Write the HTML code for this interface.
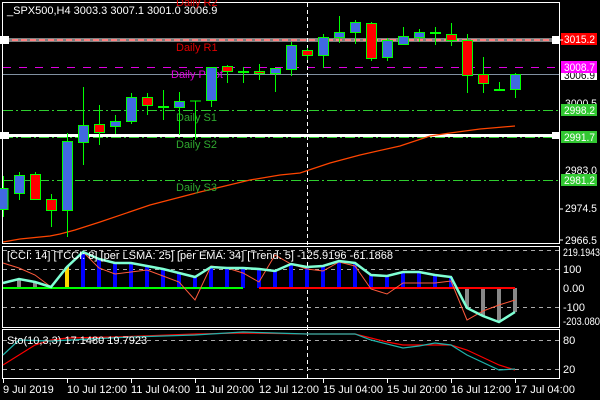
<!DOCTYPE html>
<html><head><meta charset="utf-8"><style>
html,body{margin:0;padding:0;background:#000;width:600px;height:400px;overflow:hidden}
svg{display:block}
text{font-family:"Liberation Sans",sans-serif;font-size:11px}
</style></head><body>
<svg width="600" height="400" xmlns="http://www.w3.org/2000/svg">
<rect width="600" height="400" fill="#000"/>
<rect x="2.5" y="2.5" width="557" height="241" fill="none" stroke="#fff"/>
<rect x="2.5" y="246.5" width="557" height="81" fill="none" stroke="#fff"/>
<rect x="2.5" y="329.5" width="557" height="49" fill="none" stroke="#fff"/>
<line x1="3" y1="39" x2="559" y2="39" stroke="#fff" stroke-width="1"/>
<line x1="3" y1="41" x2="559" y2="41" stroke="#fff" stroke-width="1"/>
<line x1="3" y1="40" x2="559" y2="40" stroke="#f00" stroke-width="1" stroke-dasharray="6,3"/>
<line x1="3" y1="67.5" x2="559" y2="67.5" stroke="#e000e0" stroke-dasharray="8,8"/>
<line x1="3" y1="74.5" x2="559" y2="74.5" stroke="#8090a0"/>
<line x1="3" y1="110.5" x2="559" y2="110.5" stroke="#2fcf2f" stroke-dasharray="10,3,2,3"/>
<line x1="3" y1="137.5" x2="559" y2="137.5" stroke="#2fcf2f" stroke-dasharray="10,3,2,3"/>
<line x1="3" y1="135.5" x2="559" y2="135.5" stroke="#fff" stroke-width="3"/>
<line x1="3" y1="180.5" x2="559" y2="180.5" stroke="#2fcf2f" stroke-dasharray="10,3,2,3"/>
<rect x="0" y="36" width="9" height="8" fill="#fff"/>
<rect x="0" y="132" width="9" height="7" fill="#fff"/>
<rect x="552" y="36" width="8" height="8" fill="#fff"/>
<rect x="552" y="132" width="8" height="7" fill="#fff"/>
<line x1="307.5" y1="3" x2="307.5" y2="379" stroke="#fff" stroke-dasharray="4,3"/>
<polyline fill="none" stroke="#ff4500" stroke-width="1.2" points="3,242 20,239 50,236 60,234 75,230 100,222 150,205 200,192 250,180 280,175 300,173 330,163 360,155 400,146 430,136 450,133 480,129 515,126"/>
<text x="7" y="14" fill="#fff">_SPX500,H4  3003.3 3007.1 3001.0 3006.9</text>
<text x="176" y="6" fill="#e00000" font-size="12">Daily R2</text>
<text x="176" y="51" fill="#e00000" font-size="12">Daily R1</text>
<text x="171" y="78" fill="#e000e0" font-size="12">Daily Pivot</text>
<text x="176" y="121" fill="#2fa82f" font-size="12">Daily S1</text>
<text x="176" y="148" fill="#2fa82f" font-size="12">Daily S2</text>
<text x="176" y="191" fill="#2fa82f" font-size="12">Daily S3</text>
<g stroke="#00ff00" stroke-width="1">
<line x1="3.5" y1="176" x2="3.5" y2="217"/><rect x="-2" y="188.5" width="10" height="21" fill="#4169e1"/>
<line x1="19.5" y1="172" x2="19.5" y2="200"/><rect x="14.5" y="175.5" width="10" height="18" fill="#4169e1"/>
<line x1="35.5" y1="172" x2="35.5" y2="200"/><rect x="30.5" y="174.5" width="10" height="25" fill="#f00"/>
<line x1="51.5" y1="194" x2="51.5" y2="227"/><rect x="46.5" y="199.5" width="10" height="11" fill="#f00"/>
<line x1="67.5" y1="133" x2="67.5" y2="237"/><rect x="62.5" y="141.5" width="10" height="69" fill="#4169e1"/>
<line x1="83.5" y1="87" x2="83.5" y2="165"/><rect x="78.5" y="125.5" width="10" height="17" fill="#4169e1"/>
<line x1="99.5" y1="105" x2="99.5" y2="145"/><rect x="94.5" y="124.5" width="10" height="8" fill="#f00"/>
<line x1="115.5" y1="115" x2="115.5" y2="134"/><rect x="110.5" y="121.5" width="10" height="5" fill="#4169e1"/>
<line x1="131.5" y1="93" x2="131.5" y2="124"/><rect x="126.5" y="97.5" width="10" height="24" fill="#4169e1"/>
<line x1="147.5" y1="93" x2="147.5" y2="115"/><rect x="142.5" y="97.5" width="10" height="8" fill="#f00"/>
<line x1="163.5" y1="90" x2="163.5" y2="120"/><line x1="158" y1="107" x2="169" y2="107" stroke-width="2"/>
<line x1="179.5" y1="92" x2="179.5" y2="135"/><rect x="174.5" y="101.5" width="10" height="6" fill="#4169e1"/>
<line x1="195.5" y1="101" x2="195.5" y2="140"/><line x1="190" y1="101" x2="201" y2="101"/>
<line x1="211.5" y1="67" x2="211.5" y2="107"/><rect x="206.5" y="67.5" width="10" height="33" fill="#4169e1"/>
<line x1="227.5" y1="65" x2="227.5" y2="83"/><rect x="222.5" y="66.5" width="10" height="5" fill="#f00"/>
<line x1="243.5" y1="67" x2="243.5" y2="83"/><line x1="238" y1="72" x2="249" y2="72" stroke-width="2"/>
<line x1="259.5" y1="64" x2="259.5" y2="80"/><rect x="254.5" y="71.5" width="10" height="2" fill="#f00"/>
<line x1="275.5" y1="68" x2="275.5" y2="92"/><rect x="270.5" y="68.5" width="10" height="5" fill="#4169e1"/>
<line x1="291.5" y1="42" x2="291.5" y2="76"/><rect x="286.5" y="45.5" width="10" height="24" fill="#4169e1"/>
<line x1="307.5" y1="48" x2="307.5" y2="60"/><rect x="302.5" y="50.5" width="10" height="5" fill="#f00"/>
<line x1="323.5" y1="34" x2="323.5" y2="68"/><rect x="318.5" y="37.5" width="10" height="18" fill="#4169e1"/>
<line x1="339.5" y1="16" x2="339.5" y2="43"/><rect x="334.5" y="32.5" width="10" height="5" fill="#4169e1"/>
<line x1="355.5" y1="20" x2="355.5" y2="44"/><rect x="350.5" y="22.5" width="10" height="10" fill="#4169e1"/>
<line x1="371.5" y1="22" x2="371.5" y2="61"/><rect x="366.5" y="23.5" width="10" height="35" fill="#f00"/>
<line x1="387.5" y1="38" x2="387.5" y2="61"/><rect x="382.5" y="40.5" width="10" height="17" fill="#4169e1"/>
<line x1="403.5" y1="27" x2="403.5" y2="44"/><rect x="398.5" y="36.5" width="10" height="8" fill="#4169e1"/>
<line x1="419.5" y1="29" x2="419.5" y2="42"/><rect x="414.5" y="32.5" width="10" height="5" fill="#4169e1"/>
<line x1="435.5" y1="27" x2="435.5" y2="45"/><line x1="430" y1="33" x2="441" y2="33" stroke-width="2"/>
<line x1="451.5" y1="23" x2="451.5" y2="46"/><rect x="446.5" y="34.5" width="10" height="6" fill="#f00"/>
<line x1="467.5" y1="34" x2="467.5" y2="93"/><rect x="462.5" y="40.5" width="10" height="35" fill="#f00"/>
<line x1="483.5" y1="57" x2="483.5" y2="93"/><rect x="478.5" y="74.5" width="10" height="9" fill="#f00"/>
<line x1="499.5" y1="82" x2="499.5" y2="91"/><line x1="494" y1="90" x2="505" y2="90" stroke-width="2"/>
<line x1="515.5" y1="73" x2="515.5" y2="98"/><rect x="510.5" y="74.5" width="10" height="15" fill="#4169e1"/>
</g>
<g fill="#fff">
<text x="565" y="107" textLength="32" lengthAdjust="spacingAndGlyphs">3000.5</text>
<text x="565" y="174" textLength="32" lengthAdjust="spacingAndGlyphs">2983.0</text>
<text x="565" y="212" textLength="32" lengthAdjust="spacingAndGlyphs">2974.5</text>
<text x="565" y="244" textLength="32" lengthAdjust="spacingAndGlyphs">2966.5</text>
</g>
<rect x="561" y="33" width="36" height="12" fill="#f00"/><text x="564" y="43" fill="#fff" textLength="31" lengthAdjust="spacingAndGlyphs">3015.2</text>
<rect x="561" y="69" width="36" height="11" fill="#fff"/><text x="564" y="79" fill="#000" textLength="31" lengthAdjust="spacingAndGlyphs">3006.9</text>
<rect x="561" y="61" width="36" height="12" fill="#f0f"/><text x="564" y="71" fill="#fff" textLength="31" lengthAdjust="spacingAndGlyphs">3008.7</text>
<rect x="561" y="104" width="36" height="12" fill="#32c832"/><text x="564" y="114" fill="#fff" textLength="31" lengthAdjust="spacingAndGlyphs">2998.2</text>
<rect x="561" y="131" width="36" height="12" fill="#32c832"/><text x="564" y="141" fill="#fff" textLength="31" lengthAdjust="spacingAndGlyphs">2991.7</text>
<rect x="561" y="174" width="36" height="12" fill="#32c832"/><text x="564" y="184" fill="#fff" textLength="31" lengthAdjust="spacingAndGlyphs">2981.2</text>
<g stroke="#fff"><line x1="559" y1="40" x2="563" y2="40"/><line x1="559" y1="209" x2="563" y2="209"/><line x1="559" y1="240" x2="563" y2="240"/></g>
<g stroke="#aaa" stroke-dasharray="4,4">
<line x1="3" y1="250.5" x2="559" y2="250.5"/>
<line x1="3" y1="269.5" x2="559" y2="269.5"/>
<line x1="3" y1="307.5" x2="559" y2="307.5"/>
<line x1="3" y1="340.5" x2="559" y2="340.5"/>
<line x1="3" y1="369.5" x2="559" y2="369.5"/>
</g>
<g stroke-width="4">
<line x1="19" y1="288" x2="19" y2="279" stroke="#888"/>
<line x1="35" y1="288" x2="35" y2="282" stroke="#888"/>
<line x1="67" y1="288" x2="67" y2="267" stroke="#ffd700"/>
<g stroke="#0000ff">
<line x1="83" y1="288" x2="83" y2="252"/><line x1="99" y1="288" x2="99" y2="259"/><line x1="115" y1="288" x2="115" y2="263"/><line x1="131" y1="288" x2="131" y2="263"/><line x1="147" y1="288" x2="147" y2="266"/><line x1="163" y1="288" x2="163" y2="269"/><line x1="179" y1="288" x2="179" y2="273"/><line x1="195" y1="288" x2="195" y2="277"/><line x1="211" y1="288" x2="211" y2="267"/><line x1="227" y1="288" x2="227" y2="268"/><line x1="243" y1="288" x2="243" y2="268"/><line x1="259" y1="288" x2="259" y2="269"/><line x1="275" y1="288" x2="275" y2="271"/><line x1="291" y1="288" x2="291" y2="264"/><line x1="307" y1="288" x2="307" y2="267"/><line x1="323" y1="288" x2="323" y2="266"/><line x1="339" y1="288" x2="339" y2="261"/><line x1="355" y1="288" x2="355" y2="263"/><line x1="371" y1="288" x2="371" y2="275"/><line x1="387" y1="288" x2="387" y2="276"/><line x1="403" y1="288" x2="403" y2="272"/><line x1="419" y1="288" x2="419" y2="272"/><line x1="435" y1="288" x2="435" y2="275"/><line x1="451" y1="288" x2="451" y2="277"/>
</g>
<g stroke="#888"><line x1="467" y1="288" x2="467" y2="308"/><line x1="483" y1="288" x2="483" y2="316"/><line x1="499" y1="288" x2="499" y2="322"/><line x1="515" y1="288" x2="515" y2="312"/></g>
</g>
<line x1="3" y1="288" x2="243" y2="288" stroke="#00ff00" stroke-width="2"/>
<line x1="259" y1="288" x2="515" y2="288" stroke="#f00" stroke-width="2"/>
<polyline fill="none" stroke="#ff5a3c" stroke-width="1" points="3,263 19,268 35,275 51,287 67,268 83,252 99,268 115,274 131,272 147,270 163,276 179,282 195,300 211,266 227,268 243,273 259,282 275,255 291,264 307,269 323,271 339,262 355,266 371,289 387,294 403,283 419,283 435,283 451,281 467,320 483,311 499,305 515,300"/>
<polyline fill="none" stroke="#7fffd4" stroke-width="2.5" points="3,283 19,279 35,282 51,287 67,267 83,252 99,259 115,263 131,263 147,266 163,269 179,273 195,277 211,267 227,268 243,268 259,269 275,271 291,264 307,267 323,266 339,261 355,263 371,275 387,276 403,272 419,272 435,275 451,277 467,308 483,316 499,322 515,312"/>
<text x="7" y="259" fill="#fff">[CCI: 14] [TCCI: 8] [per LSMA: 25] [per EMA: 34] [Trend: 5]  -125.9196 -61.1868</text>
<g fill="#fff">
<text x="563" y="256" textLength="37" lengthAdjust="spacingAndGlyphs">219.1943</text>
<text x="563" y="273">100</text>
<text x="563" y="292">0.00</text>
<text x="563" y="311">-100</text>
<text x="563" y="325" textLength="37" lengthAdjust="spacingAndGlyphs">-203.080</text>
<text x="563" y="344">80</text>
<text x="563" y="373">20</text>
</g>
<polyline fill="none" stroke="#f00" stroke-width="1.2" points="3,365 35,345 51,340 67,338 115,337 195,334 243,333 307,334 355,334 387,342 403,345 451,345 467,350 499,365 515,370"/>
<polyline fill="none" stroke="#20b2aa" stroke-width="1.2" points="3,355 19,340 51,341 131,337 195,335 243,332 307,334 355,334 371,340 403,348 419,346 435,343 451,345 467,355 499,370 515,369"/>
<text x="7" y="344" fill="#fff">Sto(10,3,3) 17.1480 19.7923</text>
<g stroke="#fff"><line x1="3.5" y1="379" x2="3.5" y2="383"/><line x1="67.5" y1="379" x2="67.5" y2="383"/><line x1="131.5" y1="379" x2="131.5" y2="383"/><line x1="195.5" y1="379" x2="195.5" y2="383"/><line x1="259.5" y1="379" x2="259.5" y2="383"/><line x1="323.5" y1="379" x2="323.5" y2="383"/><line x1="387.5" y1="379" x2="387.5" y2="383"/><line x1="451.5" y1="379" x2="451.5" y2="383"/><line x1="515.5" y1="379" x2="515.5" y2="383"/></g>
<g fill="#fff">
<text x="3" y="393">9 Jul 2019</text>
<text x="67" y="393">10 Jul 12:00</text>
<text x="131" y="393">11 Jul 04:00</text>
<text x="195" y="393">11 Jul 20:00</text>
<text x="259" y="393">12 Jul 12:00</text>
<text x="323" y="393">15 Jul 04:00</text>
<text x="387" y="393">15 Jul 20:00</text>
<text x="451" y="393">16 Jul 12:00</text>
<text x="515" y="393">17 Jul 04:00</text>
</g>
</svg>
</body></html>
